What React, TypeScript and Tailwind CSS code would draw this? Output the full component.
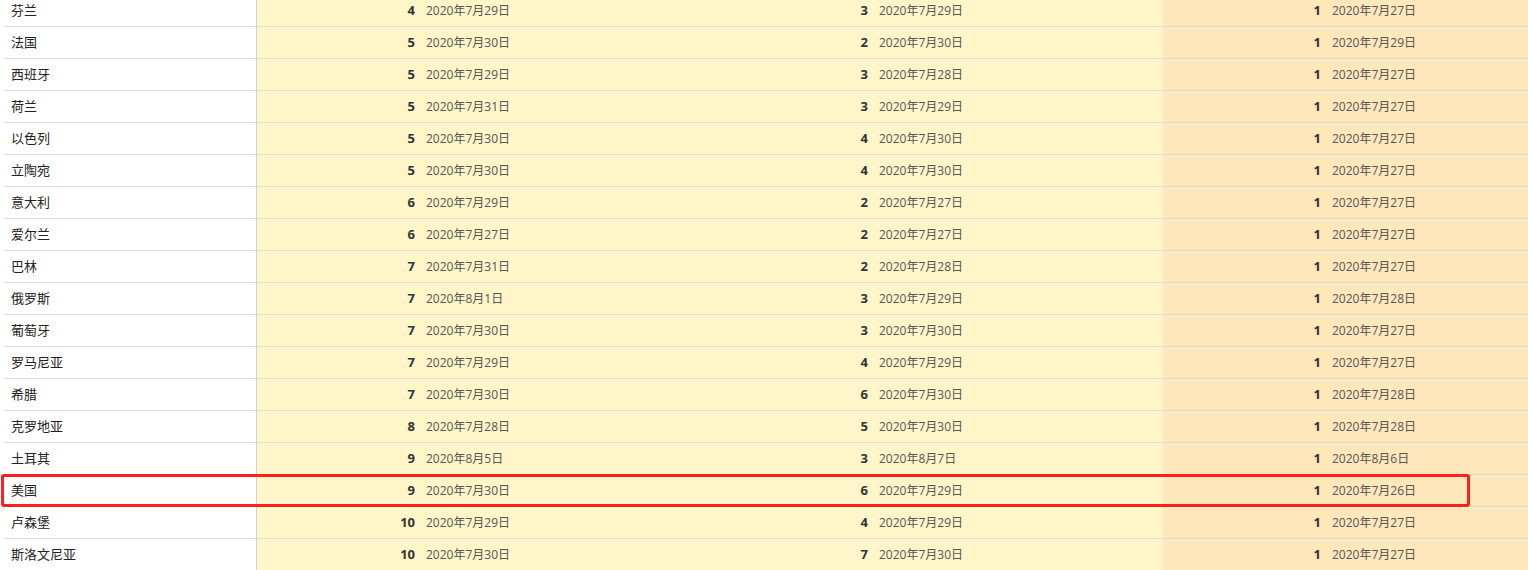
import React from 'react';

type Cell = [number, string];
type Row = { name: string; cells: Cell[] };

const rows: Row[] = [
  { name: '芬兰', cells: [[4, '2020年7月29日'], [3, '2020年7月29日'], [1, '2020年7月27日']] },
  { name: '法国', cells: [[5, '2020年7月30日'], [2, '2020年7月30日'], [1, '2020年7月29日']] },
  { name: '西班牙', cells: [[5, '2020年7月29日'], [3, '2020年7月28日'], [1, '2020年7月27日']] },
  { name: '荷兰', cells: [[5, '2020年7月31日'], [3, '2020年7月29日'], [1, '2020年7月27日']] },
  { name: '以色列', cells: [[5, '2020年7月30日'], [4, '2020年7月30日'], [1, '2020年7月27日']] },
  { name: '立陶宛', cells: [[5, '2020年7月30日'], [4, '2020年7月30日'], [1, '2020年7月27日']] },
  { name: '意大利', cells: [[6, '2020年7月29日'], [2, '2020年7月27日'], [1, '2020年7月27日']] },
  { name: '爱尔兰', cells: [[6, '2020年7月27日'], [2, '2020年7月27日'], [1, '2020年7月27日']] },
  { name: '巴林', cells: [[7, '2020年7月31日'], [2, '2020年7月28日'], [1, '2020年7月27日']] },
  { name: '俄罗斯', cells: [[7, '2020年8月1日'], [3, '2020年7月29日'], [1, '2020年7月28日']] },
  { name: '葡萄牙', cells: [[7, '2020年7月30日'], [3, '2020年7月30日'], [1, '2020年7月27日']] },
  { name: '罗马尼亚', cells: [[7, '2020年7月29日'], [4, '2020年7月29日'], [1, '2020年7月27日']] },
  { name: '希腊', cells: [[7, '2020年7月30日'], [6, '2020年7月30日'], [1, '2020年7月28日']] },
  { name: '克罗地亚', cells: [[8, '2020年7月28日'], [5, '2020年7月30日'], [1, '2020年7月28日']] },
  { name: '土耳其', cells: [[9, '2020年8月5日'], [3, '2020年8月7日'], [1, '2020年8月6日']] },
  { name: '美国', cells: [[9, '2020年7月30日'], [6, '2020年7月29日'], [1, '2020年7月26日']] },
  { name: '卢森堡', cells: [[10, '2020年7月29日'], [4, '2020年7月29日'], [1, '2020年7月27日']] },
  { name: '斯洛文尼亚', cells: [[10, '2020年7月30日'], [7, '2020年7月30日'], [1, '2020年7月27日']] },
];

const groupBg = ['bg-[#fef6c9]', 'bg-[#fef6c9]', 'bg-[#fde7bb]'];

const App: React.FC = () => {
  return (
    <div
      className="w-[1528px] h-[570px] overflow-hidden bg-white"
      style={{ fontFamily: '"Open Sans", "Noto Sans CJK SC", sans-serif' }}
    >
      <div className="-mt-[5px] w-[1616px]">
        {rows.map((row) => (
          <div key={row.name} className="relative flex h-[32px] ml-[5px] border-b border-[#dcdcdc]">
            <div className="w-[252px] shrink-0 flex items-center pl-[6px] text-[13px] text-[#222] border-r border-[#cfcfd4] bg-white">
              {row.name}
            </div>
            {row.cells.map(([n, d], i) => (
              <div key={i} className={`flex w-[453px] shrink-0 items-center ${groupBg[i]}`}>
                <div className="w-[158px] shrink-0 text-right text-[13px] font-bold text-[#333]">{n}</div>
                <div className="pl-[11px] text-[12px] text-[#555]">{d}</div>
              </div>
            ))}
            {row.name === '美国' && (
              <div className="absolute left-[-4px] top-[-1px] w-[1469px] h-[33px] border-[3px] border-[#ff1f1f] rounded-[3px] pointer-events-none" />
            )}
          </div>
        ))}
      </div>
    </div>
  );
};

export default App;
